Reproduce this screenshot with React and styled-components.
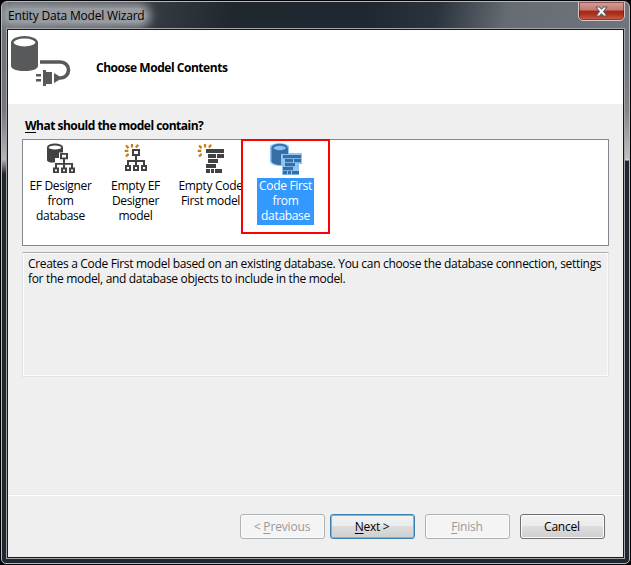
import React from 'react';
import styled, { createGlobalStyle } from 'styled-components';

const Global = createGlobalStyle`
  body { margin: 0; background: #050507; overflow: hidden; font: 12px/15px "Open Sans", "Noto Sans", sans-serif; color: #000; }
  * { box-sizing: border-box; }
`;

const Desktop = styled.div`
  width: 631px;
  height: 565px;
  padding: 1px;
  background: #050507;
`;

const Frame = styled.div`
  width: 629px;
  height: 563px;
  display: flex;
  flex-direction: column;
  overflow: hidden;
  padding: 0 5px 5px 5px;
  border: 1px solid #b4b8bd;
  border-radius: 6px 6px 5px 5px;
  background:
    linear-gradient(#70757d, #70757d 60px, #858489 110px, #c3bfc6 157px, #e4e2e6 158px, #1f2831 159px) right top / 6px 100% no-repeat,
    linear-gradient(#6f747b, #6d727b 60px, #777880 110px, #b9b3b6 157px, #1f2831 172px) left top / 6px 100% no-repeat,
    linear-gradient(100deg, #5c626a 0, #20272f 230px, #1f2831 360px, #2b333c 430px, #666c74 500px, #70757d 100%) top / 100% 27px no-repeat,
    #1f2831;
`;

const TitleBar = styled.header`
  height: 27px;
  flex: none;
  display: flex;
  justify-content: space-between;
  align-items: flex-start;
`;

const Title = styled.div`
  margin: 6px 0 0 -2px;
  padding: 0 1px 0 3px;
  line-height: 15px;
  white-space: nowrap;
  border-radius: 8px;
  background: #979ba0;
  box-shadow: 0 0 9px 5px #979ba0;
`;

const CloseButton = styled.button`
  width: 47px;
  height: 20px;
  margin: -1px -1px 0 0;
  padding: 0;
  display: flex;
  align-items: center;
  justify-content: center;
  border: 1px solid #d9c5c6;
  border-radius: 0 0 5px 5px;
  background: linear-gradient(#d5a09a 0, #c4786f 8px, #a82a17 9px, #a9301c 12px, #cf6247 18px);
  box-shadow: inset 0 0 0 1px rgba(80, 20, 20, 0.5);
`;

const Client = styled.main`
  flex: 1;
  min-height: 0;
  display: flex;
  flex-direction: column;
  background: #efefef;
  border: 1px solid #14191e;
  outline: 1px solid #a2a6aa;
`;

const Banner = styled.div`
  height: 74px;
  flex: none;
  display: flex;
  align-items: center;
  background: #fff;
`;

const BannerIcon = styled.svg`
  width: 88px;
  height: 74px;
`;

const Fit = styled.span`
  letter-spacing: ${(p) => (p.$ls === undefined ? -0.32 : p.$ls)}px;
  white-space: nowrap;
`;

const Heading = styled.h1`
  margin: 0;
  padding-top: 1px;
  font: bold 12px/15px "Open Sans", sans-serif;
`;

const Content = styled.section`
  height: 391px;
  flex: none;
  display: flex;
  flex-direction: column;
  padding: 14px 14px 0;
  border-bottom: 1px solid #e8e8e8;
`;

const Question = styled.label`
  height: 21px;
  padding-left: 3px;
  font-weight: bold;
`;

const ModelList = styled.div`
  height: 107px;
  display: flex;
  border: 1px solid #828790;
  background: #fff;
`;

const Tile = styled.div`
  width: 75px;
  padding-top: 2px;
  display: flex;
  flex-direction: column;
  align-items: center;
  position: relative;
`;

const TileIcon = styled.svg`
  width: 35px;
  height: 36px;
  flex: none;
`;

const TileLabel = styled.div`
  display: flex;
  flex-direction: column;
  align-items: center;
  padding: 0 2px 2px;
  color: ${(p) => (p.$selected ? '#fff' : '#000')};
  background: ${(p) => (p.$selected ? '#3399ff' : 'transparent')};
`;

const Highlight = styled.div`
  position: absolute;
  left: -7px;
  top: -1px;
  width: 89px;
  height: 95px;
  border: 2px solid #ff0000;
`;

const Description = styled.div`
  height: 125px;
  margin-top: 6px;
  padding: 3px 5px;
  display: flex;
  flex-direction: column;
  border: 1px solid #dfe3ea;
  border-top-color: #abadb3;
  box-shadow: inset 0 0 0 1px #fbfbfb;
`;

const Footer = styled.footer`
  flex: 1;
  display: flex;
  justify-content: flex-end;
  gap: 5px;
  padding: 18px 18px 0 0;
  border-top: 1px solid #fff;
`;

const Button = styled.button`
  width: 85px;
  height: 25px;
  padding: 0 1px 1px 0;
  font: inherit;
  border-radius: 3px;
  margin-left: ${(p) => (p.$gap ? 5 : 0)}px;
  color: ${(p) => (p.disabled ? '#9a9a9a' : '#000')};
  border: 1px solid ${(p) => (p.disabled ? '#adb2b5' : p.$primary ? '#3c7fb1' : '#707070')};
  background: ${(p) => (p.disabled ? '#f4f4f4' : 'linear-gradient(#f2f2f2, #ebebeb 50%, #dddddd 50%, #cfcfcf)')};
  box-shadow: inset 0 0 0 1px ${(p) => (p.$primary ? '#47cbf2' : '#fbfbfb')};
`;

const Key = styled.span`
  text-decoration: underline;
  text-underline-offset: 2px;
  text-decoration-thickness: 1px;
  text-decoration-skip-ink: none;
`;

const Sun = ({ x, y }) => (
  <path
    transform={`translate(${x} ${y})`}
    d="M7 0v3.500M1 1.500l2.600 2.600M13.200.8l-2.300 2.600M-.3 6.800h3.600M1 12.500l2.600-2.600"
    stroke="#c87d16"
    strokeWidth="2.200"
    fill="none"
  />
);

const Tree = ({ x, y, sy = 1 }) => (
  <path
    transform={`translate(${x} ${y}) scale(1 ${sy})`}
    fill="none"
    stroke="#424242"
    strokeWidth="2"
    d="M8 1h6v5h-6zM11 7v9M3 16v-4h16v4M1 17h4v4h-4zM9 17h4v4h-4zM17 17h4v4h-4z"
  />
);

const Bricks = ({ x, y, sy = 1, color }) => (
  <path
    transform={`translate(${x} ${y}) scale(1 ${sy})`}
    fill={color}
    d="M0 0h18v4h-18zM2 5h8v4h-8zM11 5h7v4h-7zM2 10h10v4h-10zM0 15h10v4h-10zM0 20h4v4h-4zM5 20h3v4h-3zM9 20h7v4h-7z"
  />
);

const icons = {
  designer: (
    <>
      <path d="M4 5v13c0 2 4 3 8 3v-5h4v-4h4V5z" fill="#424242" />
      <ellipse cx="12" cy="5.500" rx="7.200" ry="3" fill="#fff" stroke="#424242" strokeWidth="1.800" />
      <path d="M16 10.500h10.500v8h6v13H9v-11h7z" fill="#fafafa" />
      <Tree x={10} y={11} sy={0.91} />
    </>
  ),
  emptyDesigner: (
    <>
      <Sun x={7} y={2} />
      <Tree x={7} y={7} />
    </>
  ),
  emptyCode: (
    <>
      <Sun x={5} y={2} />
      <Bricks x={13} y={7} color="#424242" />
    </>
  ),
  code: (
    <>
      <path d="M2 5c0-5 19-5 19 0v6h13v11h-3v11H14v-9C8 24 2 23 2 19z" fill="#8fc4f8" />
      <path d="M3.500 6v13c0 2 4 4 9.500 4V12h7V6z" fill="#376fa5" />
      <ellipse cx="11.700" cy="6" rx="7.200" ry="3.200" fill="#8fc4f8" stroke="#376fa5" strokeWidth="2" />
      <path d="M13 12h8v10h-8z" fill="#8fc4f8" />
      <Bricks x={15} y={13} sy={0.8} color="#376fa5" />
    </>
  ),
};

const tiles = [
  { icon: 'designer', lines: ['EF Designer', 'from', 'database'] },
  { icon: 'emptyDesigner', lines: ['Empty EF', 'Designer', 'model'] },
  { icon: 'emptyCode', lines: ['Empty Code', 'First model'] },
  { icon: 'code', lines: ['Code First', 'from', 'database'], selected: true },
];

export default function App() {
  return (
    <Desktop>
      <Global />
      <Frame>
        <TitleBar>
          <Title><Fit $ls={-0.19}>Entity Data Model Wizard</Fit></Title>
          <CloseButton aria-label="Close">
            <svg width="13" height="11" viewBox="0 0 13 11">
              <path d="M1 1h3.500l2 2.300L8.500 1H12L8.500 5.500 12 10H8.500l-2-2.300L4.500 10H1l3.500-4.500z" fill="#f4f4f4" stroke="#53525f" strokeWidth="1" />
            </svg>
          </CloseButton>
        </TitleBar>
        <Client>
          <Banner>
            <BannerIcon viewBox="8 30 88 74">
              <path d="M11 42v24c0 3 6 5 13.500 5S38 69 38 66V42z" fill="#58595b" />
              <ellipse cx="24.500" cy="42.500" rx="12.200" ry="5.200" fill="#fff" stroke="#58595b" strokeWidth="2.600" />
              <path d="M40 62h20.500a8 8 0 0 1 0 16H57" fill="none" stroke="#58595b" strokeWidth="3.600" />
              <path d="M36 74h5v2.500h-5zM36 79h5v2.500h-5zM43 70h3v2h6v12h-6v2h-3zM54 73l5 3v4l-5 3z" fill="#58595b" />
            </BannerIcon>
            <Heading><Fit $ls={-0.46}>Choose Model Contents</Fit></Heading>
          </Banner>
          <Content>
            <Question><Fit $ls={-0.52}><Key>W</Key>hat should the model contain?</Fit></Question>
            <ModelList>
              {tiles.map((t) => (
                <Tile key={t.icon}>
                  <TileIcon viewBox="0 0 35 36">{icons[t.icon]}</TileIcon>
                  <TileLabel $selected={t.selected}>
                    {t.lines.map((l) => <Fit key={l}>{l}</Fit>)}
                  </TileLabel>
                  {t.selected && <Highlight />}
                </Tile>
              ))}
            </ModelList>
            <Description>
              <Fit>Creates a Code First model based on an existing database. You can choose the database connection, settings</Fit>
              <Fit>for the model, and database objects to include in the model.</Fit>
            </Description>
          </Content>
          <Footer>
            <Button disabled><Fit $ls={-0.15}>&lt; <Key>P</Key>revious</Fit></Button>
            <Button $primary><Fit><Key>N</Key>ext &gt;</Fit></Button>
            <Button disabled $gap><Fit $ls={-0.2}><Key>F</Key>inish</Fit></Button>
            <Button $gap><Fit $ls={-0.2}>Cancel</Fit></Button>
          </Footer>
        </Client>
      </Frame>
    </Desktop>
  );
}
